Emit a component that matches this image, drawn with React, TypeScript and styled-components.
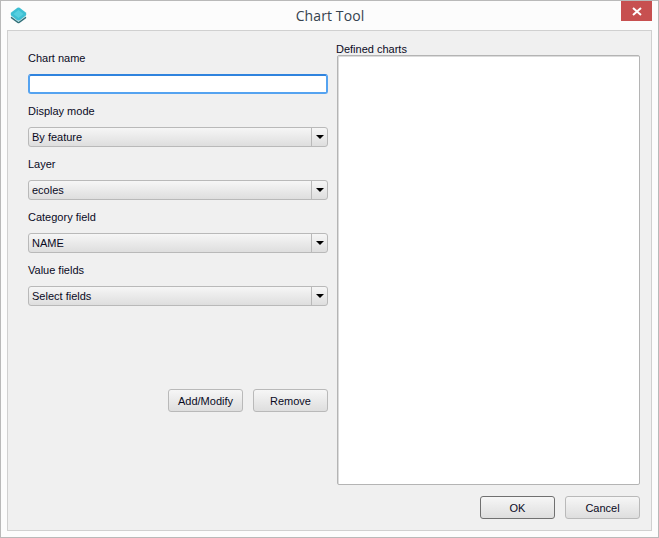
import React from "react";
import styled, { createGlobalStyle } from "styled-components";

const GlobalStyle = createGlobalStyle`
  html, body {
    margin: 0;
    padding: 0;
    background: #fcfcfc;
  }
  * {
    box-sizing: border-box;
  }
`;

const Window = styled.div`
  width: 659px;
  height: 538px;
  display: flex;
  flex-direction: column;
  background: #fcfcfc;
  border: 1px solid #b9b9b9;
  font-family: "Liberation Sans", "Noto Sans", sans-serif;
  font-size: 11px;
  color: #0a0a1e;
`;

const TitleBar = styled.div`
  height: 28px;
  display: grid;
  grid-template-columns: 1fr auto 1fr;
  padding: 0 6px 0 9px;
`;

const AppIcon = styled.svg`
  width: 17px;
  height: 17px;
  margin-top: 6px;
`;

const Title = styled.div`
  font-family: "Open Sans", "Liberation Sans", sans-serif;
  font-size: 14px;
  line-height: 29px;
  letter-spacing: 0.1px;
  margin-left: -2px;
  color: #35424f;
`;

const CloseButton = styled.div`
  justify-self: end;
  width: 31px;
  height: 20px;
  background: #c75050;
  display: flex;
  align-items: center;
  justify-content: center;
`;

const Panel = styled.div`
  flex: 1;
  margin: 1px 6px 6px;
  background: #f0f0f0;
  border: 1px solid #d0d0d0;
  display: grid;
  grid-template-columns: 300px 303px;
  column-gap: 9px;
  padding: 10px 11px 11px 20px;
`;

const LeftColumn = styled.div`
  display: flex;
  flex-direction: column;
  gap: 9px;
  padding-top: 9px;
`;

const Field = styled.div`
  display: flex;
  flex-direction: column;
  gap: 8px;
`;

const Label = styled.div`
  line-height: 16px;
  height: 16px;
`;

const NameInput = styled.input`
  width: 100%;
  height: 20px;
  padding: 0 3px;
  background: #fff;
  border: 2px solid #55a3f0;
  border-top-color: #2f83de;
  border-radius: 3px;
  outline: none;
`;

const Combo = styled.div`
  height: 20px;
  display: flex;
  align-items: stretch;
  border: 1px solid #b9b9b9;
  border-radius: 3px;
  background: linear-gradient(#f6f6f6, #dedede);
`;

const ComboText = styled.div`
  flex: 1;
  padding-left: 3px;
  line-height: 18px;
`;

const ComboArrow = styled.div`
  width: 16px;
  border-left: 1px solid #b9b9b9;
  display: flex;
  align-items: center;
  justify-content: center;
  &::after {
    content: "";
    border-left: 4px solid transparent;
    border-right: 4px solid transparent;
    border-top: 4px solid #000;
  }
`;

const ButtonRow = styled.div<{ $top: number }>`
  display: flex;
  justify-content: flex-end;
  gap: 10px;
  margin-top: ${(props) => props.$top}px;
`;

const PushButton = styled.button<{ $default?: boolean }>`
  width: 75px;
  height: 23px;
  padding: 0;
  font: inherit;
  color: inherit;
  border: 1px solid ${(props) => (props.$default ? "#707070" : "#b9b9b9")};
  border-radius: 3px;
  background: linear-gradient(#f6f6f6, #dedede);
`;

const RightColumn = styled.div`
  display: flex;
  flex-direction: column;
`;

const ListLabel = styled.div`
  line-height: 16px;
  height: 14px;
  margin-left: -1px;
`;

const ChartList = styled.div`
  height: 430px;
  background: #fff;
  border: 1px solid #b4b4b4;
  border-radius: 2px;
  box-shadow: inset 1px 1px 0 #dcdcdc;
`;

const fields = [
  { label: "Display mode", value: "By feature" },
  { label: "Layer", value: "ecoles" },
  { label: "Category field", value: "NAME" },
  { label: "Value fields", value: "Select fields" },
];

export default function App() {
  return (
    <>
      <GlobalStyle />
      <Window>
        <TitleBar>
          <AppIcon viewBox="0 0 17 17">
            <path d="M8.5 5 L16 10 Q16.5 10.6 16 11.2 L9.5 16 Q8.5 16.6 7.5 16 L1 11.2 Q0.5 10.6 1 10 Z" fill="#2f6f78" />
            <path d="M8.5 4 L16 9.4 L8.5 15 L1 9.4 Z" fill="#cfe6ea" />
            <path d="M7.4 0.8 Q8.5 0.2 9.6 0.8 L15.8 5.6 Q16.9 7 15.8 8.4 L9.8 13.2 Q8.5 14 7.2 13.2 L1.2 8.4 Q0.1 7 1.2 5.6 Z" fill="#3dbfd3" />
            <path d="M8.5 3 L13.5 7 L8.5 11 L3.5 7 Z" fill="#56cfe0" />
          </AppIcon>
          <Title>Chart Tool</Title>
          <CloseButton>
            <svg width="10" height="9" viewBox="0 0 10 9">
              <path d="M1 1 L9 8 M9 1 L1 8" stroke="#fff" strokeWidth="2" />
            </svg>
          </CloseButton>
        </TitleBar>
        <Panel>
          <LeftColumn>
            <Field>
              <Label>Chart name</Label>
              <NameInput />
            </Field>
            {fields.map((field) => (
              <Field key={field.label}>
                <Label>{field.label}</Label>
                <Combo>
                  <ComboText>{field.value}</ComboText>
                  <ComboArrow />
                </Combo>
              </Field>
            ))}
            <ButtonRow $top={74}>
              <PushButton>Add/Modify</PushButton>
              <PushButton>Remove</PushButton>
            </ButtonRow>
          </LeftColumn>
          <RightColumn>
            <ListLabel>Defined charts</ListLabel>
            <ChartList />
            <ButtonRow $top={11}>
              <PushButton $default>OK</PushButton>
              <PushButton>Cancel</PushButton>
            </ButtonRow>
          </RightColumn>
        </Panel>
      </Window>
    </>
  );
}
